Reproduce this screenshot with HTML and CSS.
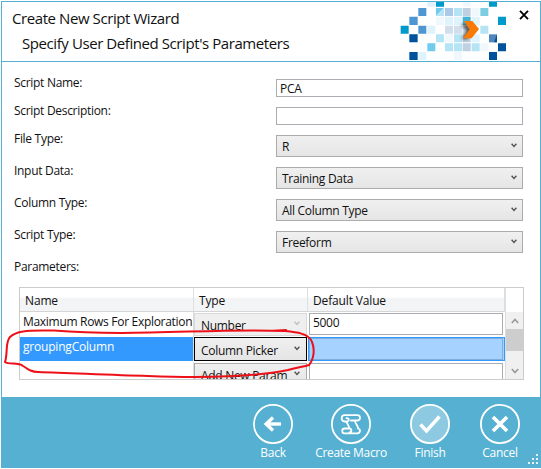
FILE: index.html
```
<!DOCTYPE html>
<html lang="en">
<head>
<meta charset="utf-8">
<title>Create New Script Wizard</title>
<link rel="stylesheet" href="styles.css">
</head>
<body>
<main class="window">
  <header class="header">
    <div class="titles">
      <h1 class="title">Create New Script Wizard</h1>
      <h2 class="subtitle">Specify User Defined Script's Parameters</h2>
    </div>
    <svg class="mosaic" width="112" height="59" viewBox="27 6 336 177">
      <defs>
        <filter id="soft" x="-50%" y="-50%" width="200%" height="200%"><feGaussianBlur stdDeviation="5"/></filter>
      </defs>
      <g fill="#0099cc"><path d="M138 6h24v14h-24zM297 6h24v14h-24zM32 77h24v24h-24zM324 50h24v25h-24z"/></g>
      <g fill="#4f97d3"><path d="M85 24h24v24h-24zM58 50h25v25h-25zM85 77h24v24h-24z"/></g>
      <g fill="#00529c"><path d="M58 103h25v24h-25zM58 156h25v24h-25zM324 130h24v24h-24zM297 156h24v24h-24z"/></g>
      <path fill="#4f86bd" d="M297 103h24v24h-24z"/><path fill="#00529c" d="M321 103v24h-9z"/>
      <g fill="#70cbee"><path d="M112 130h24v24h-24zM138 24h24l-24 24z"/></g>
      <g fill="#7dcde2"><path d="M271 24h24v24h-24z"/></g>
      <path fill="#45b3d4" d="M218 50h24v25h-24z"/>
      <g fill="#def3fc"><path d="M112 6h24v14h-24zM112 77h24v24h-24zM85 156h24v24h-24zM165 50h24v25h-24zM192 50h24v25h-24zM245 50h24v25h-24zM245 103h24v24h-24z"/></g>
      <g fill="#f0f8fd"><path d="M218 6h24v14h-24zM245 24h24v24h-24zM138 50h24v25h-24zM165 103h24v24h-24zM271 130h24v24h-24zM192 156h24v24h-24z"/></g>
      <g fill="#b5e4f5"><path d="M162 24v24h-24zM138 103h24v24h-24zM165 130h24v24h-24zM192 24h24v24h-24zM192 103h24v24h-24zM192 130h24v24h-24zM245 130h24v24h-24zM271 77h24v24h-24z"/></g>
      <g fill="#d2deec"><path d="M165 77h24v24h-24zM192 77h24v24h-24zM218 77h24v24h-24z"/></g>
      <g fill="#bfd0e2"><path d="M218 24h24v24h-24zM218 103h24v24h-24zM218 130h24v24h-24z"/></g>
      <path fill="#abc9e8" d="M165 24h24v24h-24z"/>
      <path d="M213 72h20l20 20-22 26h-16l14-26z" fill="#333" opacity=".75" filter="url(#soft)"/>
      <path d="M222 63h25l20 24-22 28h-26l20-27z" fill="#f97a05"/>
    </svg>
    <svg class="close" width="10" height="10" viewBox="0 0 10 10"><path d="M1 .8 9 9.2M9 .8 1 9.2" stroke="#000" stroke-width="1.8"/></svg>
  </header>

  <section class="content">
    <div class="form">
      <div class="field"><span class="label">Script Name:</span><div class="input">PCA</div></div>
      <div class="field"><span class="label">Script Description:</span><div class="input"></div></div>
      <div class="field"><span class="label">File Type:</span><div class="select"><span>R</span><svg class="chev" viewBox="0 0 6 5"><path d="M.6.7 3 3.5 5.4.7"/></svg></div></div>
      <div class="field"><span class="label">Input Data:</span><div class="select"><span>Training Data</span><svg class="chev" viewBox="0 0 6 5"><path d="M.6.7 3 3.5 5.4.7"/></svg></div></div>
      <div class="field"><span class="label">Column Type:</span><div class="select"><span>All Column Type</span><svg class="chev" viewBox="0 0 6 5"><path d="M.6.7 3 3.5 5.4.7"/></svg></div></div>
      <div class="field"><span class="label">Script Type:</span><div class="select"><span>Freeform</span><svg class="chev" viewBox="0 0 6 5"><path d="M.6.7 3 3.5 5.4.7"/></svg></div></div>
      <div class="field"><span class="label">Parameters:</span></div>
    </div>

    <div class="table">
      <div class="grid">
        <div class="row head"><div>Name</div><div>Type</div><div>Default Value</div></div>
        <div class="row">
          <div class="name">Maximum Rows For Exploration</div>
          <div class="pick disabled"><span>Number</span><svg class="chev" viewBox="0 0 6 5"><path d="M.6.7 3 3.5 5.4.7"/></svg></div>
          <div class="cell"><div class="value">5000</div></div>
        </div>
        <div class="row selected">
          <div class="name">groupingColumn</div>
          <div class="pick active"><span>Column Picker</span><svg class="chev" viewBox="0 0 6 5"><path d="M.6.7 3 3.5 5.4.7"/></svg></div>
          <div class="cell"><div class="value"></div></div>
        </div>
        <div class="row">
          <div class="name"></div>
          <div class="pick"><span>Add New Param</span><svg class="chev" viewBox="0 0 6 5"><path d="M.6.7 3 3.5 5.4.7"/></svg></div>
          <div class="cell"><div class="value"></div></div>
        </div>
      </div>
      <div class="scroll">
        <div class="track">
          <svg width="8" height="6" viewBox="0 0 8 6"><path d="M.8 5 4 1.5 7.2 5"/></svg>
          <div class="thumb"></div>
          <svg width="8" height="6" viewBox="0 0 8 6"><path d="M.8 1 4 4.5 7.2 1"/></svg>
        </div>
      </div>
    </div>
  </section>

  <footer class="footer">
    <div class="action"><svg width="40" height="40" viewBox="0 0 40 40"><circle cx="20" cy="20" r="19.1"/><path d="M28 20H15" stroke-width="3.4"/><path d="M20 13.6 13.2 20 20 26.4" stroke-width="3.4"/></svg><span>Back</span></div>
    <div class="action wide"><svg width="40" height="40" viewBox="0 0 40 40"><circle cx="20" cy="20" r="19.1"/><path stroke-width="1.8" stroke-linejoin="round" stroke-linecap="round" d="M13.5 11.200H26.500c3.300 0 3.300 5.300 0 5.300H24c-.5 3 3.500 5 3 8M13.500 11.200c-3.800 0-3.800 6.300 0 6.300h2.500c2.500 0 2.500-3.300-.5-3.300M15.500 17.500c.5 2.500 3 4.500 2.500 7M27 24.500c3 .8 2.500 4.800-.8 4.800H13.500c-3 0-3-4.800 0-4.800H18.500c2.500.3 2.500 3.800 0 4M24 16.500h-4"/></svg><span>Create Macro</span></div>
    <div class="action"><svg width="40" height="40" viewBox="0 0 40 40"><circle class="lit" cx="20" cy="20" r="19.1"/><path d="m10.500 20.500 6 6.500L29.500 12.500" stroke-width="3.500"/></svg><span>Finish</span></div>
    <div class="action"><svg width="40" height="40" viewBox="0 0 40 40"><circle cx="20" cy="20" r="19.1"/><path d="m13 13 14 14M27 13 13 27" stroke-width="3.700"/></svg><span>Cancel</span></div>
    <svg class="grip" width="11" height="11" viewBox="0 0 11 11"><path fill="#e8f4f9" d="M8 0h2v2H8zM4 4h2v2H4zM8 4h2v2H8zM0 8h2v2H0zM4 8h2v2H4zM8 8h2v2H8z"/></svg>
  </footer>

  <svg class="markup" width="325" height="60" viewBox="0 325 325 60"><path d="M54 330.500C34 331 18 329 10 337 5 342 8 353 5 362c4 3 13 0 18 4 6 4 9 6 15 6 35 1 70 3 110 4 50 2 100 2 140-6 10-3 15-3 21-5 5-6 6-16 3-23-3-9-17-10-28-11-70-3-150 6-230-.5M272 331l14-1"/></svg>
</main>
</body>
</html>
```
FILE: styles.css
```
* { box-sizing: border-box; }
body {
  margin: 0;
  background: #fff;
  color: #111;
  font: 12px/16px "Open Sans", "Noto Sans", sans-serif;
  letter-spacing: -0.3px;
  overflow: hidden;
}
.window {
  position: relative;
  width: 540px;
  height: 467px;
  margin: 1px 0 0 1px;
  border: 1px solid #56b0d3;
  border-bottom: 0;
  display: flex;
  flex-direction: column;
}
.header {
  height: 60px;
  flex: none;
  display: flex;
  border-bottom: 1px solid #56b0d3;
}
.titles { width: 397px; padding: 4px 0 0 10px; }
.title, .subtitle {
  margin: 0;
  font-size: 15px;
  line-height: 25px;
  font-weight: 400;
  letter-spacing: -0.42px;
  white-space: nowrap;
}
.subtitle { padding-left: 10px; }
.mosaic { flex: none; }
.close { margin: 8px 0 0 8px; }
.content { flex: 1; padding: 17px 16px 0 17px; }
.form {
  display: grid;
  row-gap: 10px;
}
.field {
  display: grid;
  grid-template-columns: 257px 247px;
}
.label { height: 16px; margin: -4px 0 0 -5px; white-space: nowrap; }
.input {
  height: 18px;
  border: 1px solid #abadb3;
  padding: 1px 3px;
  line-height: 16px;
}
.select, .pick {
  height: 22px;
  border: 1px solid #acacac;
  background: linear-gradient(#f0f0f0, #e5e5e5);
  display: flex;
  justify-content: space-between;
  padding: 3px 5px 0;
  white-space: nowrap;
}
.chev { width: 6px; height: 5px; margin-top: 4px; flex: none; }
.chev path { fill: none; stroke: #555; stroke-width: 1.4; }
.table {
  width: 505px;
  height: 93px;
  margin-top: 12px;
  border: 1px solid #ccc;
  display: flex;
  overflow: hidden;
}
.grid { width: 485px; flex: none; }
.row { height: 25px; display: grid; grid-template-columns: 174px 114px 197px; }
.row.head { height: 24px; background: linear-gradient(#fff 40%, #f3f4f6 45%, #f3f4f6); border-bottom: 1px solid #d5d5d5; }
.head div { padding: 5px 0 0 5px; border-right: 1px solid #dedfe1; letter-spacing: -0.15px; }
.name { padding: 2px 0 0 3px; border-right: 1px solid #ddd; white-space: nowrap; overflow: hidden; }
.pick { width: 113px; height: 23px; margin-top: 1px; padding: 4px 5px 0 6px; overflow: hidden; }
.pick .chev { margin-top: 3px; margin-right: 1px; }
.disabled { border-color: #d9d9d9; background: #efefef; }
.disabled .chev path { stroke: #bfbfbf; }
.active { border: 1px solid #000; height: 24px; margin-top: 0; padding-top: 5px; }
.cell { padding: 1px; }
.value { width: 194px; height: 22px; border: 1px solid #abadb3; padding: 1px 3px; }
.selected .name { background: #3399ff; color: #fff; height: 24px; letter-spacing: -0.2px; }
.selected .cell { border: 1px solid #3399ff; padding: 0; height: 24px; background: #a6d2ff; }
.selected .value { border-color: #7eaedc; }
.scroll { flex: 1; padding-top: 24px; border-left: 1px solid #ddd; }
.track {
  height: 67px;
  background: #f0f0f0;
  display: flex;
  flex-direction: column;
  align-items: center;
  padding: 6px 0 5px;
}
.track path { fill: none; stroke: #999; stroke-width: 1.6; }
.thumb { width: 100%; height: 22px; margin: 5px 0 17px; background: #cdcdcd; }
.footer {
  height: 71px;
  flex: none;
  background: #55b0d2;
  display: flex;
  padding: 7px 0 0 238px;
  color: #fff;
  position: relative;
}
.action { width: 66px; display: flex; flex-direction: column; align-items: center; white-space: nowrap; }
.action.wide { width: 90px; }
.action:nth-child(3) { width: 68px; }
.action:nth-child(4) { width: 72px; }
.action span { line-height: 17px; }
.action svg { fill: none; stroke: #fff; stroke-width: 1.8; }
.action svg .lit { fill: #8dcae1; }
.grip { position: absolute; right: 1px; bottom: 3px; }
.markup { position: absolute; left: -2px; top: 323px; fill: none; stroke: #ee1018; stroke-width: 2; stroke-linecap: round; }
```
